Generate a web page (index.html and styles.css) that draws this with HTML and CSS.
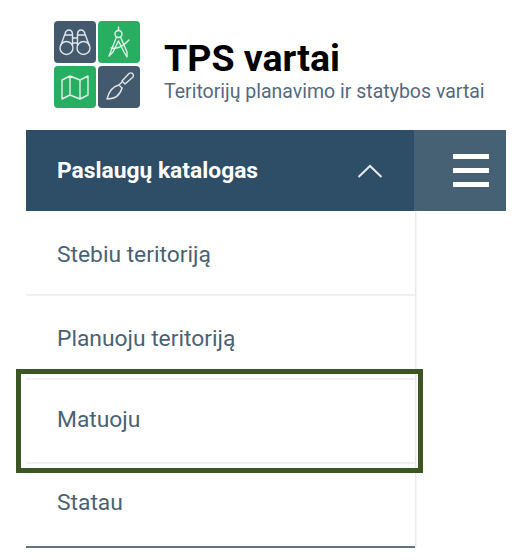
FILE: index.html
```html
<!DOCTYPE html>
<html lang="lt">
<head>
  <meta charset="UTF-8" />
  <title>TPS vartai</title>
  <link rel="stylesheet" href="styles.css">
</head>
<body>
  <header class="brand">
    <div class="logo">
      <div class="tile tile-blue">
        <svg viewBox="0 0 42 42" class="tile-icon">
          <circle cx="12.5" cy="27" r="6.5"/>
          <circle cx="29.5" cy="27" r="6.5"/>
          <path d="M6.5 25 L11 13 Q12 9 15 9 Q18 9 18.5 13 L18.5 25 M35.5 25 L31 13 Q30 9 27 9 Q24 9 23.5 13 L23.5 25 M18.5 17 H23.5 M18.5 22 H23.5 M11 14 H18.5 M23.5 14 H31"/>
        </svg>
      </div>
      <div class="tile tile-green">
        <svg viewBox="0 0 42 42" class="tile-icon">
          <circle cx="20.5" cy="13" r="3.5"/>
          <path d="M20.5 6 V9.5 M18.5 16 L11 35 L15 31 L20.5 20 L26 31 L29 36 L29 31 L22.5 16"/>
          <path d="M13 27 Q22 29 31 19"/>
        </svg>
      </div>
      <div class="tile tile-green">
        <svg viewBox="0 0 42 42" class="tile-icon">
          <path d="M8 14 L16 10 L26 14 L34 10 V29 L26 33 L16 29 L8 33 Z M16 10 V29 M26 14 V33"/>
        </svg>
      </div>
      <div class="tile tile-blue">
        <svg viewBox="0 0 42 42" class="tile-icon">
          <path d="M24 15 L31 7.5 Q33 6 35 8 Q36 10 34.5 11.5 L27 18 Z"/>
          <path d="M24 16 L21 19 L24 22"/>
          <path d="M21 19 Q12 21 9 33 Q21 33 24 22"/>
        </svg>
      </div>
    </div>
    <div class="brand-text">
      <h1 class="brand-title">TPS vartai</h1>
      <p class="brand-sub">Teritorijų planavimo ir statybos vartai</p>
    </div>
  </header>

  <nav class="bar">
    <div class="bar-main">
      <span class="bar-title">Paslaugų katalogas</span>
      <svg viewBox="0 0 26 14" class="chevron"><path d="M1.5 13 L13 2 L24.5 13"/></svg>
    </div>
    <div class="bar-burger">
      <span class="burger-line"></span>
      <span class="burger-line"></span>
      <span class="burger-line"></span>
    </div>
  </nav>

  <ul class="menu">
    <li class="menu-item menu-item-low">Stebiu teritoriją</li>
    <li class="menu-item menu-item-low">Planuoju teritoriją</li>
    <li class="menu-item">Matuoju<span class="mark"></span></li>
    <li class="menu-item menu-item-last">Statau</li>
  </ul>
</body>
</html>
```

FILE: styles.css
```css
body {
  background-color: #fff;
  color: #4a6276;
  font-family: Roboto, "Liberation Sans", sans-serif;
  margin: 0;
  padding: 0;
}
.brand {
  display: flex;
  align-items: flex-start;
  height: 130px;
  padding: 21px 0 0 54px;
  box-sizing: border-box;
}
.logo {
  display: grid;
  grid-template-columns: 42px 42px;
  grid-template-rows: 42px 42px;
  gap: 3px 2px;
}
.tile {
  border-radius: 4px;
}
.tile-blue {
  background-color: #43596e;
}
.tile-green {
  background-color: #27ae60;
}
.tile-icon {
  display: block;
  width: 42px;
  height: 42px;
  fill: none;
  stroke: #fff;
  stroke-width: 1.4;
  stroke-linejoin: round;
  stroke-linecap: round;
  opacity: 0.85;
}
.brand-text {
  margin-left: 24px;
  padding-top: 15px;
}
.brand-title {
  margin: 0;
  color: #000;
  font-size: 37.5px;
  font-weight: 700;
  line-height: 44px;
}
.brand-sub {
  margin: 2px 0 0;
  color: #55697f;
  font-size: 19.5px;
  line-height: 20px;
}
.bar {
  display: flex;
  height: 81px;
  margin: 0 7px 0 26px;
  color: #fff;
}
.bar-main {
  display: flex;
  align-items: center;
  justify-content: space-between;
  width: 388px;
  padding: 0 31px;
  box-sizing: border-box;
  background-color: #2e4d66;
}
.bar-title {
  font-size: 22.8px;
  font-weight: 700;
}
.chevron {
  width: 26px;
  height: 14px;
  fill: none;
  stroke: #e6eaed;
  stroke-width: 2;
}
.bar-burger {
  flex: 1;
  display: flex;
  flex-direction: column;
  justify-content: center;
  align-items: flex-end;
  gap: 9px;
  padding-right: 17px;
  background-color: #466074;
}
.burger-line {
  width: 36px;
  height: 5px;
  background-color: #fff;
}
.menu {
  list-style: none;
  width: 389px;
  margin: 0 0 0 26px;
  padding: 1px 0 0;
  box-shadow: 1px 0 2px rgba(0, 0, 0, 0.12);
}
.menu-item {
  position: relative;
  display: flex;
  align-items: center;
  height: 84px;
  padding: 0 0 3px 31px;
  box-sizing: border-box;
  border-bottom: 2px solid #eef0f1;
  font-size: 22.8px;
}
.menu-item-low {
  padding: 2px 0 0 31px;
}
.menu-item-last {
  padding-bottom: 5px;
  border-bottom-color: #5f7587;
}
.mark {
  position: absolute;
  left: -10px;
  right: -8px;
  top: -11px;
  bottom: -11px;
  border: 5px solid #3c5623;
}
```
